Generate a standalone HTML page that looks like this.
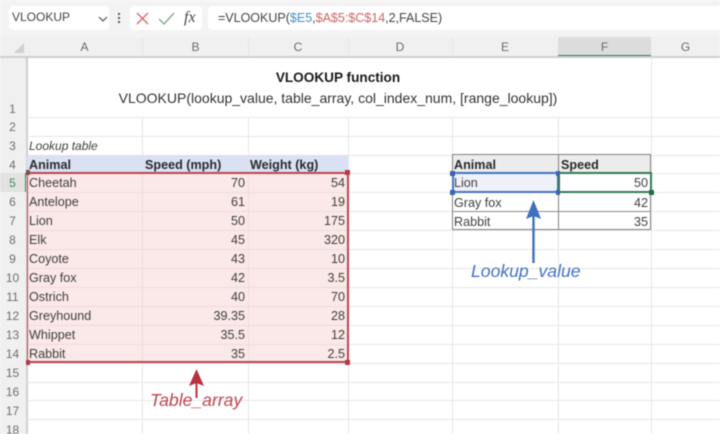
<!DOCTYPE html>
<html><head><meta charset="utf-8"><style>
html,body{margin:0;padding:0;background:#fff}
#p{position:relative;width:720px;height:434px;overflow:hidden;background:#fff;font-family:"Liberation Sans",sans-serif;font-size:12.6px;color:#404040;filter:blur(.5px)}
#p div{position:absolute;box-sizing:border-box}
.t{white-space:nowrap;line-height:19px;height:19px}
.r{text-align:right}
.h{color:#6a6a6a;text-align:center;line-height:19px;height:19px;font-size:12px}
.n{left:0;width:25px;color:#6e6e6e;text-align:center;line-height:19px;height:19px;font-size:12px}
.b{font-weight:bold;color:#2a2a2a}
.lh{background:#e6e6e6}.lv{background:#e6e6e6}
</style></head><body><div id="p">
<div style="left:0;top:0;width:720px;height:37px;background:#f3f3f3"></div>
<div style="left:9px;top:6px;width:100px;height:24px;background:#fff;border-radius:4px"></div>
<div class="t" style="left:12px;top:8px;color:#444;font-size:12px">VLOOKUP</div>
<svg style="position:absolute;left:97px;top:15px" width="12" height="8"><path d="M2 2l4 4 4-4" fill="none" stroke="#666" stroke-width="1.3"/></svg>
<div style="left:118px;top:13px;width:2px;height:2px;background:#555"></div>
<div style="left:118px;top:17px;width:2px;height:2px;background:#555"></div>
<div style="left:118px;top:21px;width:2px;height:2px;background:#555"></div>
<div style="left:130px;top:6px;width:72px;height:24px;background:#fff;border-radius:4px"></div>
<svg style="position:absolute;left:130px;top:6px" width="72" height="24"><path d="M7 7l11 11M18 7L7 18" stroke="#e06a68" stroke-width="1.4" fill="none"/><path d="M29 13l5 5 10-11" stroke="#7fae8c" stroke-width="1.4" fill="none"/></svg>
<div class="t" style="left:184px;top:8px;font-family:'Liberation Serif',serif;font-style:italic;font-size:16px;color:#444">fx</div>
<div style="left:208px;top:6px;width:512px;height:24px;background:#fff;border-radius:4px 0 0 4px"></div>
<div class="t" style="left:218px;top:9px;font-size:12.5px;color:#444">=VLOOKUP(<span style="color:#3f8fc4">$E5</span>,<span style="color:#d0605e">$A$5:$C$14</span>,2,FALSE)</div>

<div style="left:0;top:37px;width:720px;height:20px;background:#f0f0f0"></div>
<div style="left:0;top:37px;width:27px;height:397px;background:#f0f0f0"></div>
<div style="left:558px;top:37px;width:93px;height:19px;background:#dcdcdc"></div>
<div style="left:558px;top:55px;width:93px;height:2px;background:#2f7d55"></div>
<div style="left:0;top:173px;width:27px;height:19px;background:#e2e2e2"></div>
<div style="left:25px;top:173px;width:2px;height:19px;background:#3c8a60"></div>
<svg style="position:absolute;left:13px;top:42px" width="12" height="12"><path d="M11 1v10H1z" fill="#d0d0d0"/></svg>
<div style="left:0;top:56px;width:720px;height:1.5px;background:#cfcfcf"></div>
<div style="left:26px;top:57px;width:1.5px;height:377px;background:#cfcfcf"></div>

<div class="h" style="left:27px;top:38px;width:115px">A</div>
<div class="h" style="left:143px;top:38px;width:105px">B</div>
<div class="h" style="left:248px;top:38px;width:100px">C</div>
<div class="h" style="left:348px;top:38px;width:104px">D</div>
<div class="h" style="left:452px;top:38px;width:106px">E</div>
<div class="h" style="left:558px;top:38px;width:93px">F</div>
<div class="h" style="left:651px;top:38px;width:69px">G</div>

<div class="lh" style="left:27px;top:117px;width:693px;height:1px"></div>
<div class="lh" style="left:27px;top:136px;width:693px;height:1px"></div>
<div class="lh" style="left:27px;top:155px;width:693px;height:1px"></div>
<div class="lh" style="left:27px;top:173px;width:693px;height:1px"></div>
<div class="lh" style="left:27px;top:192px;width:693px;height:1px"></div>
<div class="lh" style="left:27px;top:211px;width:693px;height:1px"></div>
<div class="lh" style="left:27px;top:230px;width:693px;height:1px"></div>
<div class="lh" style="left:27px;top:249px;width:693px;height:1px"></div>
<div class="lh" style="left:27px;top:268px;width:693px;height:1px"></div>
<div class="lh" style="left:27px;top:287px;width:693px;height:1px"></div>
<div class="lh" style="left:27px;top:306px;width:693px;height:1px"></div>
<div class="lh" style="left:27px;top:325px;width:693px;height:1px"></div>
<div class="lh" style="left:27px;top:344px;width:693px;height:1px"></div>
<div class="lh" style="left:27px;top:363px;width:693px;height:1px"></div>
<div class="lh" style="left:27px;top:382px;width:693px;height:1px"></div>
<div class="lh" style="left:27px;top:400px;width:693px;height:1px"></div>
<div class="lh" style="left:27px;top:419px;width:693px;height:1px"></div>
<div class="lv" style="left:142px;top:117px;width:1px;height:317px"></div>
<div class="lv" style="left:248px;top:117px;width:1px;height:317px"></div>
<div class="lv" style="left:348px;top:117px;width:1px;height:317px"></div>
<div class="lv" style="left:452px;top:117px;width:1px;height:317px"></div>
<div class="lv" style="left:558px;top:117px;width:1px;height:317px"></div>
<div class="lv" style="left:651px;top:57px;width:1px;height:377px"></div>
<div class="lv" style="left:142px;top:37px;width:1px;height:20px"></div>
<div class="lv" style="left:248px;top:37px;width:1px;height:20px"></div>
<div class="lv" style="left:348px;top:37px;width:1px;height:20px"></div>
<div class="lv" style="left:452px;top:37px;width:1px;height:20px"></div>

<div style="left:27px;top:155px;width:321px;height:18px;background:#d9e1f2"></div>
<div style="left:28px;top:173px;width:320px;height:190px;background:#fbe8e8"></div>
<div style="left:28px;top:192px;width:320px;height:1px;background:#f0dada"></div>
<div style="left:28px;top:211px;width:320px;height:1px;background:#f0dada"></div>
<div style="left:28px;top:230px;width:320px;height:1px;background:#f0dada"></div>
<div style="left:28px;top:249px;width:320px;height:1px;background:#f0dada"></div>
<div style="left:28px;top:268px;width:320px;height:1px;background:#f0dada"></div>
<div style="left:28px;top:287px;width:320px;height:1px;background:#f0dada"></div>
<div style="left:28px;top:306px;width:320px;height:1px;background:#f0dada"></div>
<div style="left:28px;top:325px;width:320px;height:1px;background:#f0dada"></div>
<div style="left:28px;top:344px;width:320px;height:1px;background:#f0dada"></div>
<div style="left:142px;top:173px;width:1px;height:190px;background:#f0dada"></div>
<div style="left:248px;top:173px;width:1px;height:190px;background:#f0dada"></div>
<div style="left:27px;top:172px;width:322px;height:191px;border:2px solid #c0444f;border-left-width:1px"></div>
<div style="left:345px;top:170px;width:5px;height:5px;background:#b23a46"></div>
<div style="left:345px;top:360px;width:5px;height:5px;background:#b23a46"></div>
<div style="left:26px;top:360px;width:4px;height:5px;background:#b23a46"></div>
<div style="left:26px;top:170px;width:4px;height:5px;background:#8a4a4a"></div>

<div class="n" style="top:100px">1</div>
<div class="n" style="top:118px">2</div>
<div class="n" style="top:137px">3</div>
<div class="n" style="top:156px">4</div>
<div class="n" style="top:174px;color:#3c8a60">5</div>
<div class="n" style="top:193px">6</div>
<div class="n" style="top:212px">7</div>
<div class="n" style="top:231px">8</div>
<div class="n" style="top:250px">9</div>
<div class="n" style="top:269px">10</div>
<div class="n" style="top:288px">11</div>
<div class="n" style="top:307px">12</div>
<div class="n" style="top:326px">13</div>
<div class="n" style="top:345px">14</div>
<div class="n" style="top:364px">15</div>
<div class="n" style="top:383px">16</div>
<div class="n" style="top:402px">17</div>
<div class="n" style="top:421px">18</div>

<div class="t b" style="left:27px;width:622px;top:68px;text-align:center;color:#1a1a1a;font-size:13.6px">VLOOKUP function</div>
<div class="t" style="left:27px;width:622px;top:89px;text-align:center;font-size:14px;color:#333">VLOOKUP(lookup_value, table_array, col_index_num, [range_lookup])</div>
<div class="t" style="left:29px;top:137px;font-style:italic;font-size:12px">Lookup table</div>

<div class="t b" style="left:29px;top:156px">Animal</div>
<div class="t b" style="left:145px;top:156px">Speed (mph)</div>
<div class="t b" style="left:250px;top:156px">Weight (kg)</div>

<div class="t" style="left:29px;top:174px">Cheetah</div><div class="t r" style="right:475px;top:174px">70</div><div class="t r" style="right:375px;top:174px">54</div>
<div class="t" style="left:29px;top:193px">Antelope</div><div class="t r" style="right:475px;top:193px">61</div><div class="t r" style="right:375px;top:193px">19</div>
<div class="t" style="left:29px;top:212px">Lion</div><div class="t r" style="right:475px;top:212px">50</div><div class="t r" style="right:375px;top:212px">175</div>
<div class="t" style="left:29px;top:231px">Elk</div><div class="t r" style="right:475px;top:231px">45</div><div class="t r" style="right:375px;top:231px">320</div>
<div class="t" style="left:29px;top:250px">Coyote</div><div class="t r" style="right:475px;top:250px">43</div><div class="t r" style="right:375px;top:250px">10</div>
<div class="t" style="left:29px;top:269px">Gray fox</div><div class="t r" style="right:475px;top:269px">42</div><div class="t r" style="right:375px;top:269px">3.5</div>
<div class="t" style="left:29px;top:288px">Ostrich</div><div class="t r" style="right:475px;top:288px">40</div><div class="t r" style="right:375px;top:288px">70</div>
<div class="t" style="left:29px;top:307px">Greyhound</div><div class="t r" style="right:475px;top:307px">39.35</div><div class="t r" style="right:375px;top:307px">28</div>
<div class="t" style="left:29px;top:326px">Whippet</div><div class="t r" style="right:475px;top:326px">35.5</div><div class="t r" style="right:375px;top:326px">12</div>
<div class="t" style="left:29px;top:345px">Rabbit</div><div class="t r" style="right:475px;top:345px">35</div><div class="t r" style="right:375px;top:345px">2.5</div>

<svg style="position:absolute;left:180px;top:366px" width="34" height="34"><path d="M16.5 32V14" stroke="#b8323f" stroke-width="2" fill="none"/><path d="M16.5 3L9 20l7.5-3 7.5 3z" fill="#b8323f"/></svg>
<div class="t" style="left:150px;top:391px;font-style:italic;font-size:17.6px;color:#c0444f">Table_array</div>

<div style="left:452px;top:154px;width:199px;height:19px;background:#ececec"></div>
<div style="left:452px;top:173px;width:106px;height:19px;background:#eef1f8"></div>
<div style="left:452px;top:154px;width:199px;height:76px;border:1px solid #808080"></div>
<div style="left:558px;top:154px;width:1px;height:76px;background:#808080"></div>
<div style="left:452px;top:211px;width:199px;height:1px;background:#8a8a8a"></div>
<div style="left:452px;top:172px;width:107px;height:21px;border:2px solid #4472c4"></div>
<div style="left:558px;top:172px;width:94px;height:21px;border:2px solid #2f7d55"></div>
<div style="left:450px;top:171px;width:5px;height:5px;background:#3a62b5"></div>
<div style="left:556px;top:171px;width:4px;height:5px;background:#3a62b5"></div>
<div style="left:450px;top:190px;width:5px;height:5px;background:#3a62b5"></div>
<div style="left:556px;top:190px;width:4px;height:5px;background:#3a62b5"></div>
<div style="left:649px;top:190px;width:5px;height:5px;background:#226b45"></div>

<div class="t b" style="left:454px;top:156px">Animal</div>
<div class="t b" style="left:561px;top:156px">Speed</div>
<div class="t" style="left:454px;top:174px">Lion</div><div class="t r" style="right:72px;top:174px">50</div>
<div class="t" style="left:454px;top:194px">Gray fox</div><div class="t r" style="right:72px;top:194px">42</div>
<div class="t" style="left:454px;top:213px">Rabbit</div><div class="t r" style="right:72px;top:213px">35</div>

<svg style="position:absolute;left:522px;top:197px" width="24" height="70"><path d="M11.5 66V14" stroke="#3f6fc0" stroke-width="2.4" fill="none"/><path d="M11.5 3L4 22l7.5-3 7.5 3z" fill="#3f6fc0"/></svg>
<div class="t" style="left:471px;top:262px;font-style:italic;font-size:17.6px;color:#4472c4">Lookup_value</div>
</div></body></html>
